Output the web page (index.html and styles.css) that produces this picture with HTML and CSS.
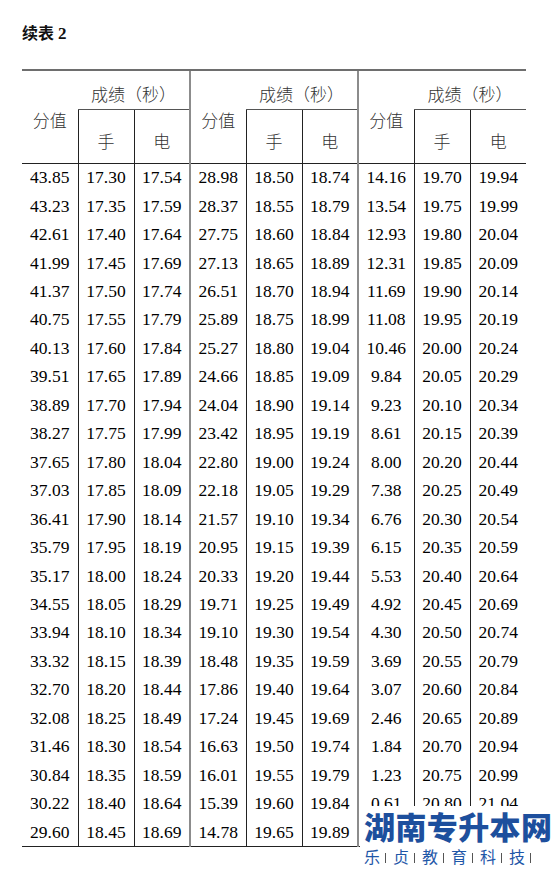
FILE: index.html
```html
<!DOCTYPE html>
<html>
<head>
<meta charset="utf-8">
<title>续表 2</title>
<link rel="stylesheet" href="styles.css">
</head>
<body>
<div class="page">
  <h1 class="title">续表 <span class="num">2</span></h1>
  <table class="score">
    <colgroup>
      <col><col><col><col><col><col><col><col><col>
    </colgroup>
    <thead>
      <tr class="h1">
        <th rowspan="2" class="val first">分值</th>
        <th colspan="2" class="group">成绩（秒）</th>
        <th rowspan="2" class="val">分值</th>
        <th colspan="2" class="group">成绩（秒）</th>
        <th rowspan="2" class="val">分值</th>
        <th colspan="2" class="group">成绩（秒）</th>
      </tr>
      <tr class="h2">
        <th class="hand">手</th><th class="elec">电</th>
        <th class="hand">手</th><th class="elec">电</th>
        <th class="hand">手</th><th class="elec">电</th>
      </tr>
    </thead>
    <tbody>
      <tr><td class="v first">43.85</td><td class="m">17.30</td><td class="m">17.54</td><td class="v">28.98</td><td class="m">18.50</td><td class="m">18.74</td><td class="v">14.16</td><td class="m">19.70</td><td class="m">19.94</td></tr>
      <tr><td class="v first">43.23</td><td class="m">17.35</td><td class="m">17.59</td><td class="v">28.37</td><td class="m">18.55</td><td class="m">18.79</td><td class="v">13.54</td><td class="m">19.75</td><td class="m">19.99</td></tr>
      <tr><td class="v first">42.61</td><td class="m">17.40</td><td class="m">17.64</td><td class="v">27.75</td><td class="m">18.60</td><td class="m">18.84</td><td class="v">12.93</td><td class="m">19.80</td><td class="m">20.04</td></tr>
      <tr><td class="v first">41.99</td><td class="m">17.45</td><td class="m">17.69</td><td class="v">27.13</td><td class="m">18.65</td><td class="m">18.89</td><td class="v">12.31</td><td class="m">19.85</td><td class="m">20.09</td></tr>
      <tr><td class="v first">41.37</td><td class="m">17.50</td><td class="m">17.74</td><td class="v">26.51</td><td class="m">18.70</td><td class="m">18.94</td><td class="v">11.69</td><td class="m">19.90</td><td class="m">20.14</td></tr>
      <tr><td class="v first">40.75</td><td class="m">17.55</td><td class="m">17.79</td><td class="v">25.89</td><td class="m">18.75</td><td class="m">18.99</td><td class="v">11.08</td><td class="m">19.95</td><td class="m">20.19</td></tr>
      <tr><td class="v first">40.13</td><td class="m">17.60</td><td class="m">17.84</td><td class="v">25.27</td><td class="m">18.80</td><td class="m">19.04</td><td class="v">10.46</td><td class="m">20.00</td><td class="m">20.24</td></tr>
      <tr><td class="v first">39.51</td><td class="m">17.65</td><td class="m">17.89</td><td class="v">24.66</td><td class="m">18.85</td><td class="m">19.09</td><td class="v">9.84</td><td class="m">20.05</td><td class="m">20.29</td></tr>
      <tr><td class="v first">38.89</td><td class="m">17.70</td><td class="m">17.94</td><td class="v">24.04</td><td class="m">18.90</td><td class="m">19.14</td><td class="v">9.23</td><td class="m">20.10</td><td class="m">20.34</td></tr>
      <tr><td class="v first">38.27</td><td class="m">17.75</td><td class="m">17.99</td><td class="v">23.42</td><td class="m">18.95</td><td class="m">19.19</td><td class="v">8.61</td><td class="m">20.15</td><td class="m">20.39</td></tr>
      <tr><td class="v first">37.65</td><td class="m">17.80</td><td class="m">18.04</td><td class="v">22.80</td><td class="m">19.00</td><td class="m">19.24</td><td class="v">8.00</td><td class="m">20.20</td><td class="m">20.44</td></tr>
      <tr><td class="v first">37.03</td><td class="m">17.85</td><td class="m">18.09</td><td class="v">22.18</td><td class="m">19.05</td><td class="m">19.29</td><td class="v">7.38</td><td class="m">20.25</td><td class="m">20.49</td></tr>
      <tr><td class="v first">36.41</td><td class="m">17.90</td><td class="m">18.14</td><td class="v">21.57</td><td class="m">19.10</td><td class="m">19.34</td><td class="v">6.76</td><td class="m">20.30</td><td class="m">20.54</td></tr>
      <tr><td class="v first">35.79</td><td class="m">17.95</td><td class="m">18.19</td><td class="v">20.95</td><td class="m">19.15</td><td class="m">19.39</td><td class="v">6.15</td><td class="m">20.35</td><td class="m">20.59</td></tr>
      <tr><td class="v first">35.17</td><td class="m">18.00</td><td class="m">18.24</td><td class="v">20.33</td><td class="m">19.20</td><td class="m">19.44</td><td class="v">5.53</td><td class="m">20.40</td><td class="m">20.64</td></tr>
      <tr><td class="v first">34.55</td><td class="m">18.05</td><td class="m">18.29</td><td class="v">19.71</td><td class="m">19.25</td><td class="m">19.49</td><td class="v">4.92</td><td class="m">20.45</td><td class="m">20.69</td></tr>
      <tr><td class="v first">33.94</td><td class="m">18.10</td><td class="m">18.34</td><td class="v">19.10</td><td class="m">19.30</td><td class="m">19.54</td><td class="v">4.30</td><td class="m">20.50</td><td class="m">20.74</td></tr>
      <tr><td class="v first">33.32</td><td class="m">18.15</td><td class="m">18.39</td><td class="v">18.48</td><td class="m">19.35</td><td class="m">19.59</td><td class="v">3.69</td><td class="m">20.55</td><td class="m">20.79</td></tr>
      <tr><td class="v first">32.70</td><td class="m">18.20</td><td class="m">18.44</td><td class="v">17.86</td><td class="m">19.40</td><td class="m">19.64</td><td class="v">3.07</td><td class="m">20.60</td><td class="m">20.84</td></tr>
      <tr><td class="v first">32.08</td><td class="m">18.25</td><td class="m">18.49</td><td class="v">17.24</td><td class="m">19.45</td><td class="m">19.69</td><td class="v">2.46</td><td class="m">20.65</td><td class="m">20.89</td></tr>
      <tr><td class="v first">31.46</td><td class="m">18.30</td><td class="m">18.54</td><td class="v">16.63</td><td class="m">19.50</td><td class="m">19.74</td><td class="v">1.84</td><td class="m">20.70</td><td class="m">20.94</td></tr>
      <tr><td class="v first">30.84</td><td class="m">18.35</td><td class="m">18.59</td><td class="v">16.01</td><td class="m">19.55</td><td class="m">19.79</td><td class="v">1.23</td><td class="m">20.75</td><td class="m">20.99</td></tr>
      <tr><td class="v first">30.22</td><td class="m">18.40</td><td class="m">18.64</td><td class="v">15.39</td><td class="m">19.60</td><td class="m">19.84</td><td class="v">0.61</td><td class="m">20.80</td><td class="m">21.04</td></tr>
      <tr><td class="v first">29.60</td><td class="m">18.45</td><td class="m">18.69</td><td class="v">14.78</td><td class="m">19.65</td><td class="m">19.89</td><td class="v"></td><td class="m"></td><td class="m"></td></tr>
    </tbody>
  </table>

  <div class="watermark">
    <div class="wm-name">湖南专升本网</div>
    <div class="wm-sub">
      <span>乐</span><i class="sep"></i>
      <span>贞</span><i class="sep"></i>
      <span>教</span><i class="sep"></i>
      <span>育</span><i class="sep"></i>
      <span>科</span><i class="sep"></i>
      <span>技</span><i class="sep"></i>
    </div>
  </div>
</div>
</body>
</html>
```

FILE: styles.css
```css
html, body {
  margin: 0;
  padding: 0;
  background: #ffffff;
}

.page {
  position: relative;
  width: 556px;
  height: 871px;
  box-sizing: border-box;
  padding: 26px 0 0 22px;
  overflow: hidden;
}

.title {
  margin: 0 0 27px;
  font-family: "Liberation Serif", "Noto Sans CJK SC", serif;
  font-size: 16px;
  line-height: 16px;
  font-weight: bold;
  color: #111;
}

.title .num {
  font-family: "Liberation Serif", serif;
  font-size: 17px;
}

.score {
  border-collapse: collapse;
  table-layout: fixed;
  width: 504px;
}

.score col {
  width: 56px;
}

.score th {
  padding: 0;
  font-family: "Noto Sans CJK SC", sans-serif;
  font-size: 17px;
  line-height: 17px;
  font-weight: 300;
  color: #333;
  text-align: center;
  vertical-align: middle;
}

.score thead tr.h1 th {
  border-top: 2px solid #6e6e6e;
}

.score .h1 {
  height: 39px;
}

.score .h2 {
  height: 54px;
}

.score th.group {
  padding-top: 7px;
  border-bottom: 1px solid #555;
}

.score th.val {
  padding-top: 6px;
  border-left: 2px solid #8c8c8c;
}

.score th.val.first {
  border-left: none;
}

.score th.hand,
.score th.elec {
  padding-top: 8px;
  border-left: 1px solid #222;
}

.score thead tr.h2 th,
.score th.val {
  border-bottom: 1px solid #222;
}

.score td {
  height: 28.46px;
  padding: 0;
  font-family: "Liberation Serif", serif;
  font-size: 17.5px;
  line-height: 17px;
  color: #000;
  text-align: center;
  vertical-align: middle;
}

.score td.v {
  border-left: 2px solid #8c8c8c;
}

.score td.v.first {
  border-left: none;
}

.score td.m {
  border-left: 1px solid #222;
}

.score tbody tr:last-child td {
  border-bottom: 1px solid #222;
}

.watermark {
  position: absolute;
  left: 360px;
  top: 806px;
  width: 196px;
  height: 65px;
  background: #ffffff;
  box-sizing: border-box;
  padding: 3px 0 0 4px;
  color: #1d4f9d;
}

.wm-name {
  font-family: "Noto Sans CJK SC", sans-serif;
  font-size: 31px;
  line-height: 34px;
  font-weight: 900;
  letter-spacing: 0.4px;
  white-space: nowrap;
}

.wm-sub {
  display: flex;
  align-items: center;
  margin-top: 3px;
  font-family: "Noto Sans CJK SC", sans-serif;
  font-size: 16px;
  line-height: 20px;
  color: #1f57a8;
}

.wm-sub span {
  width: 16px;
}

.wm-sub .sep {
  display: block;
  width: 1px;
  height: 10px;
  margin: 3px 7px 0 5px;
  background: #555;
}
```
